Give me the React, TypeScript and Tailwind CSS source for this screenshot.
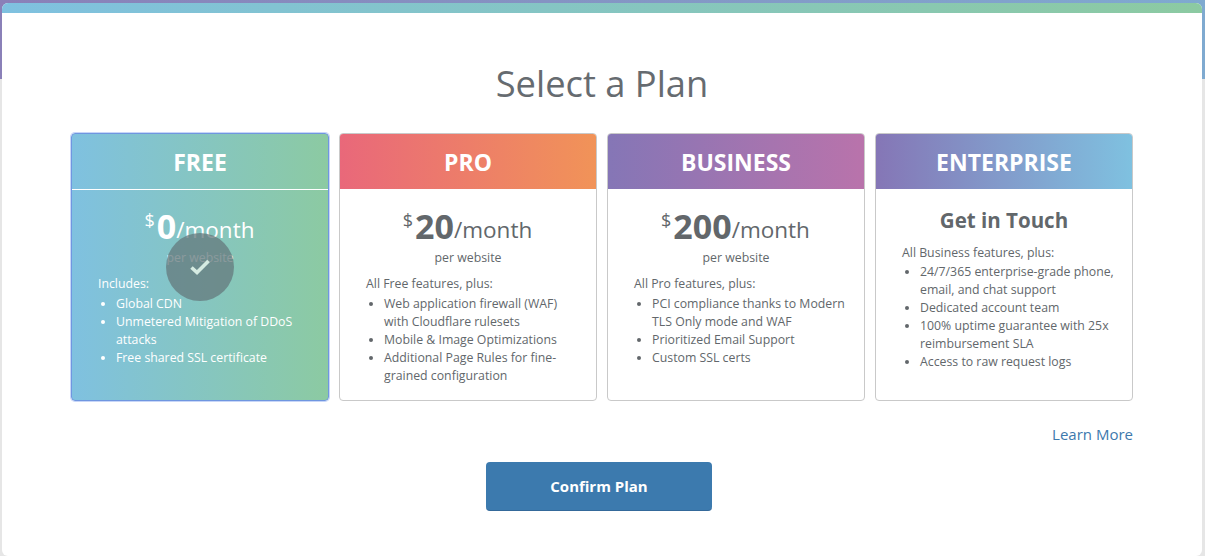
import React from "react";

type Plan = {
  name: string;
  head: string;
  price?: string;
  intro: string;
  items: string[];
  selected?: boolean;
};

const plans: Plan[] = [
  {
    name: "FREE",
    head: "bg-[linear-gradient(90deg,#7fc1e0,#8ccaa2)]",
    price: "0",
    intro: "Includes:",
    items: ["Global CDN", "Unmetered Mitigation of DDoS attacks", "Free shared SSL certificate"],
    selected: true,
  },
  {
    name: "PRO",
    head: "bg-[linear-gradient(90deg,#e9687a,#f19358)]",
    price: "20",
    intro: "All Free features, plus:",
    items: [
      "Web application firewall (WAF) with Cloudflare rulesets",
      "Mobile & Image Optimizations",
      "Additional Page Rules for fine-grained configuration",
    ],
  },
  {
    name: "BUSINESS",
    head: "bg-[linear-gradient(90deg,#8576b6,#b973ab)]",
    price: "200",
    intro: "All Pro features, plus:",
    items: ["PCI compliance thanks to Modern TLS Only mode and WAF", "Prioritized Email Support", "Custom SSL certs"],
  },
  {
    name: "ENTERPRISE",
    head: "bg-[linear-gradient(90deg,#8576b6,#7fc1e0)]",
    intro: "All Business features, plus:",
    items: [
      "24/7/365 enterprise-grade phone, email, and chat support",
      "Dedicated account team",
      "100% uptime guarantee with 25x reimbursement SLA",
      "Access to raw request logs",
    ],
  },
];

function Card({ plan }: { plan: Plan }) {
  const s = plan.selected;
  return (
    <div
      className={
        "relative w-[258px] h-[268px] rounded-[4px] overflow-hidden " +
        (s
          ? "border border-[#7096e0] shadow-[0_0_0_1px_rgba(130,165,240,0.45)] bg-[linear-gradient(90deg,#7fc1e0,#8ccaa2)] text-white"
          : "border border-[#c9c9c9] bg-white text-[#62676b]")
      }
    >
      <div
        className={
          "flex items-center justify-center pt-[2px] text-[23px] font-bold text-white " +
          (s ? "border-b border-white h-[56px]" : "h-[55px] " + plan.head)
        }
      >
        {plan.name}
      </div>
      {plan.price ? (
        <div className={s ? "pt-[12px]" : "pt-[13px]"}>
          <div className="h-[46px] flex items-baseline justify-center leading-[46px]">
            <span className="text-[18px] relative -top-[11px] mr-[3px]">$</span>
            <span className="text-[34px] font-bold relative top-[1px] -left-[1px]">{plan.price}</span>
            <span className="text-[22.5px] relative -left-[1px]">/month</span>
          </div>
          <div className="text-center text-[12.3px] leading-[18px] mt-[1px]">per website</div>
        </div>
      ) : (
        <div className="pt-[16px] h-[62px] text-center text-[20.5px] font-bold leading-[30px]">Get in Touch</div>
      )}
      <div className={"pl-[26px] pr-[18px] text-[12.3px] leading-[18px] " + (plan.price ? "mt-[8px]" : "mt-[-7px]")}>
        <div>{plan.intro}</div>
        <ul className={"list-disc pl-[18px] " + (plan.price ? "mt-[2px]" : "mt-[1px]")}>
          {plan.items.map((t) => (
            <li key={t}>{t}</li>
          ))}
        </ul>
      </div>
      {s && (
        <div className="absolute left-[94px] top-[99px] w-[68px] h-[68px] rounded-full bg-[#64787c]/75 flex items-center justify-center">
          <svg width="22" height="18" viewBox="0 0 22 18" fill="none">
            <path d="M2.5 9.5 L8 14.5 L19.5 3" stroke="#d5ebe2" strokeWidth="3.6" />
          </svg>
        </div>
      )}
    </div>
  );
}

export default function App() {
  return (
    <div className="h-[556px] overflow-hidden bg-[#e6e6e6] bg-[linear-gradient(90deg,#8a80b8,#7faad0)] bg-[length:100%_79px] bg-no-repeat pt-[3px] px-[2px] font-['Open_Sans','Noto_Sans',sans-serif]">
      <div className="w-[1200px] h-[553px] rounded-[6px] overflow-hidden bg-white">
        <div className="h-[10px] bg-[linear-gradient(90deg,#7fc1e0,#8ccaa2)]" />
        <h1 className="mt-[46px] text-center text-[36.3px] leading-[48px] text-[#666b70] font-normal">Select a Plan</h1>
        <div className="mt-[26px] ml-[69px] w-[1062px] flex gap-[10px]">
          {plans.map((p) => (
            <Card key={p.name} plan={p} />
          ))}
        </div>
        <div className="mt-[22px] ml-[69px] w-[1062px] text-right text-[15px] leading-[22px] text-[#3d79ad]">Learn More</div>
        <button className="block mt-[17px] ml-[484px] w-[226px] h-[49px] rounded-[4px] bg-[#3c7aae] border-b border-[#34699a] text-white text-[15px] font-bold">
          Confirm Plan
        </button>
      </div>
    </div>
  );
}
